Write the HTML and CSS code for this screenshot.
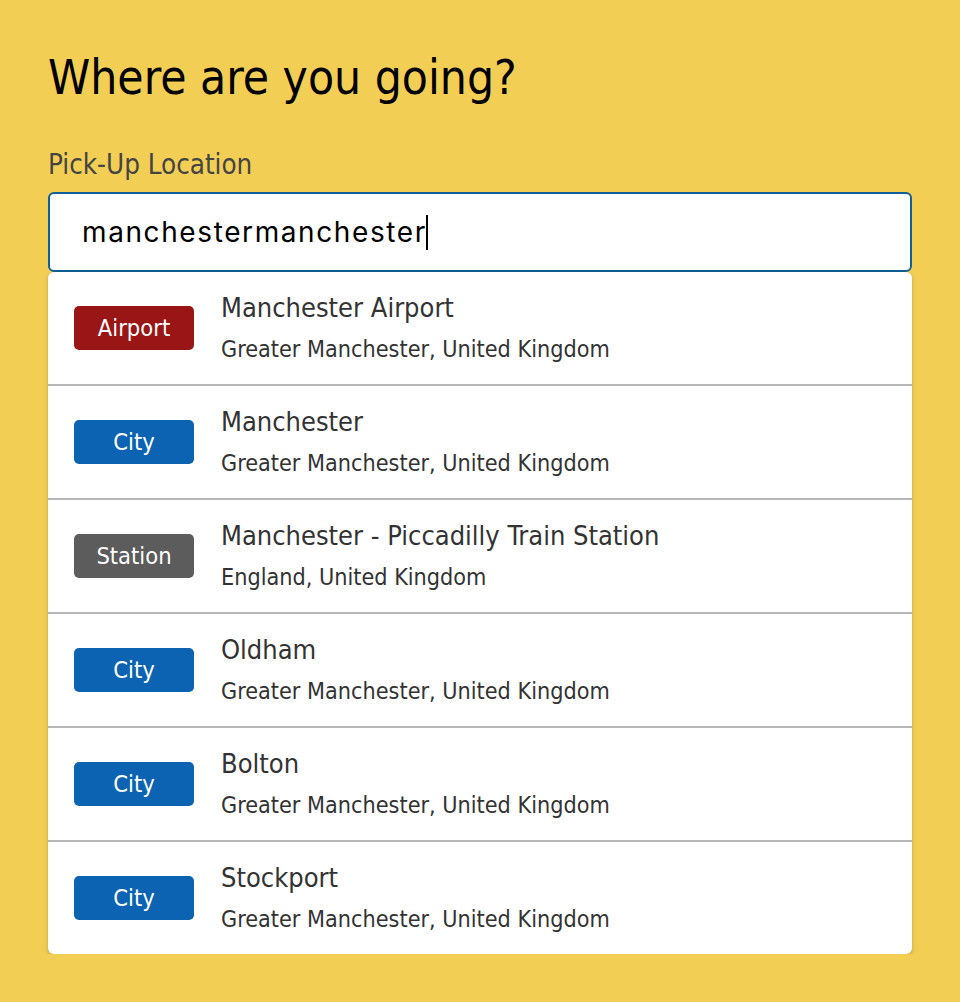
FILE: index.html
```html
<!DOCTYPE html>
<html lang="en">
<head>
<meta charset="utf-8">
<title>Where are you going?</title>
<link rel="stylesheet" href="styles.css">
</head>
<body>
<main class="page">
  <h1 class="title">Where are you going?</h1>
  <label class="label">Pick-Up Location</label>
  <div class="field">
    <div class="input"><span class="value">manchestermanchester</span><span class="caret"></span></div>
    <ul class="results">
      <li class="row">
        <span class="badge badge-airport">Airport</span>
        <div class="info">
          <div class="name">Manchester Airport</div>
          <div class="region">Greater Manchester, United Kingdom</div>
        </div>
      </li>
      <li class="row">
        <span class="badge badge-city">City</span>
        <div class="info">
          <div class="name">Manchester</div>
          <div class="region">Greater Manchester, United Kingdom</div>
        </div>
      </li>
      <li class="row">
        <span class="badge badge-station">Station</span>
        <div class="info">
          <div class="name">Manchester - Piccadilly Train Station</div>
          <div class="region">England, United Kingdom</div>
        </div>
      </li>
      <li class="row">
        <span class="badge badge-city">City</span>
        <div class="info">
          <div class="name">Oldham</div>
          <div class="region">Greater Manchester, United Kingdom</div>
        </div>
      </li>
      <li class="row">
        <span class="badge badge-city">City</span>
        <div class="info">
          <div class="name">Bolton</div>
          <div class="region">Greater Manchester, United Kingdom</div>
        </div>
      </li>
      <li class="row">
        <span class="badge badge-city">City</span>
        <div class="info">
          <div class="name">Stockport</div>
          <div class="region">Greater Manchester, United Kingdom</div>
        </div>
      </li>
    </ul>
  </div>
</main>
</body>
</html>
```

FILE: styles.css
```css
html, body {
  margin: 0;
  padding: 0;
  background: #f2ce55;
}
body {
  font-family: "DejaVu Sans Condensed", "DejaVu Sans", sans-serif;
  font-stretch: condensed;
  color: #333;
}
.page {
  padding: 48px 48px 0;
  display: flex;
  flex-direction: column;
}
.title {
  margin: 0;
  font-size: 47.5px;
  font-weight: normal;
  line-height: 60px;
  color: #000;
}
.label {
  margin-top: 38px;
  font-size: 27.5px;
  line-height: 36px;
  color: #444;
}
.field {
  margin-top: 10px;
  display: flex;
  flex-direction: column;
}
.input {
  height: 80px;
  box-sizing: border-box;
  border: 2px solid #115f98;
  border-radius: 6px;
  background: #fff;
  padding: 0 32px;
  display: flex;
  align-items: center;
  font-family: Inter, "Liberation Sans", sans-serif;
  font-stretch: normal;
  font-size: 28px;
  letter-spacing: 1.6px;
  color: #000;
}
.caret {
  display: inline-block;
  width: 2px;
  height: 35px;
  background: #000;
  margin-left: -1px;
}
.results {
  list-style: none;
  margin: 0;
  padding: 0;
  background: #fff;
  border-radius: 6px;
  box-shadow: 0 2px 4px rgba(0, 0, 0, 0.2);
}
.row {
  height: 112px;
  display: flex;
  align-items: center;
  padding: 0 26px;
  border-top: 2px solid #b8b8b8;
}
.row:first-child {
  border-top: none;
}
.badge {
  width: 120px;
  height: 44px;
  flex: none;
  border-radius: 5px;
  color: #fff;
  font-size: 23.5px;
  display: flex;
  align-items: center;
  justify-content: center;
}
.badge-airport { background: #9a1515; }
.badge-city { background: #0b63b2; }
.badge-station { background: #5c5c5c; }
.info {
  margin-left: 27px;
  display: flex;
  flex-direction: column;
  gap: 8px;
}
.name {
  font-size: 27px;
  line-height: 34px;
}
.region {
  font-size: 23.2px;
  line-height: 32px;
}
```
